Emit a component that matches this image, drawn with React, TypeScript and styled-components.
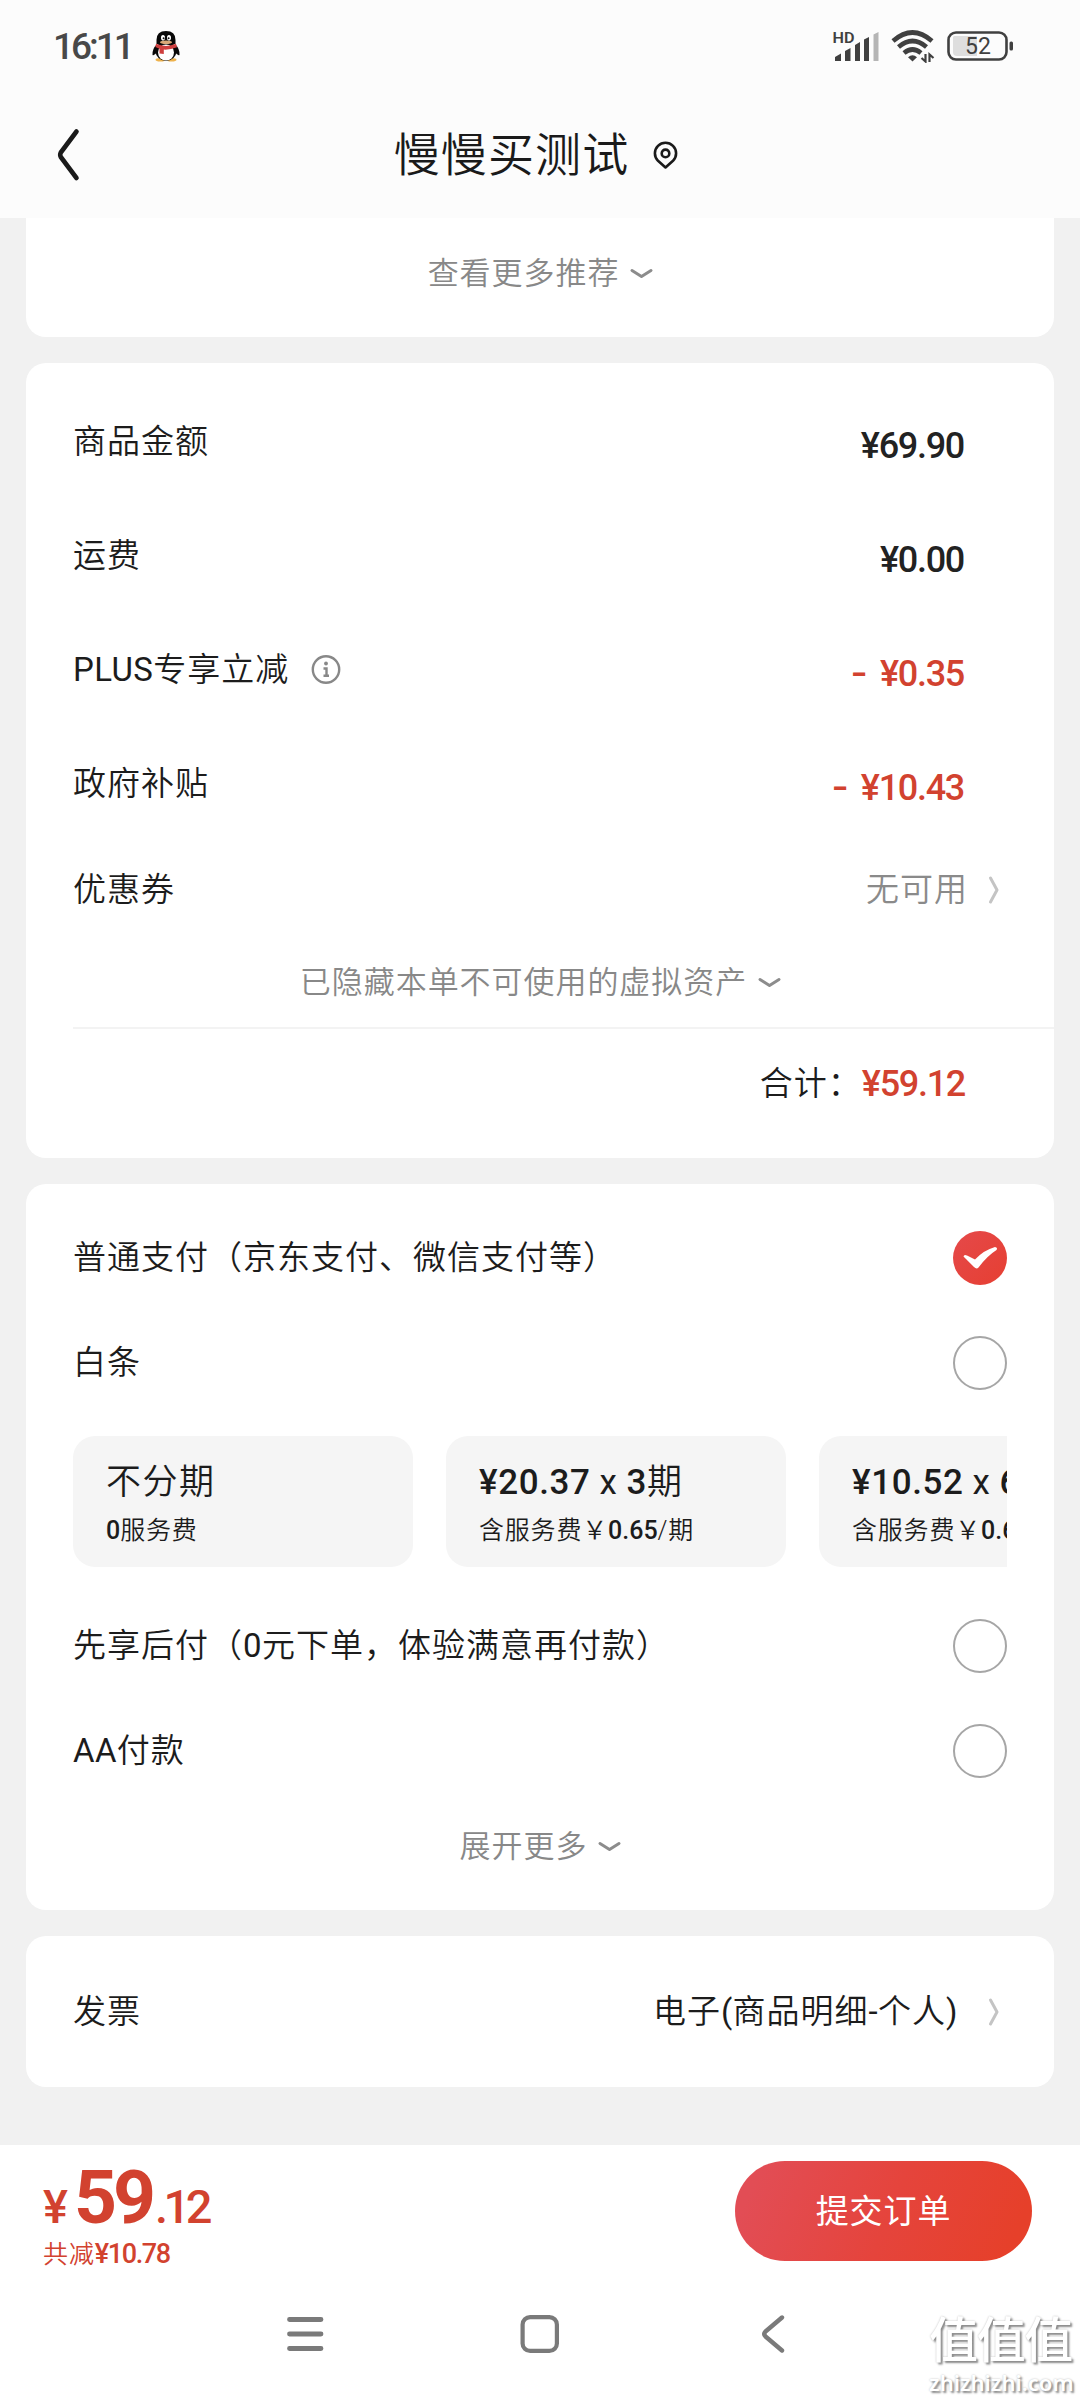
import React from "react";
import styled, { createGlobalStyle } from "styled-components";

const GlobalStyle = createGlobalStyle`
  * { box-sizing: border-box; }
  body {
    margin: 0;
    background: #f1f1f1;
    font-family: Roboto, "Noto Sans CJK SC", sans-serif;
    font-weight: 350;
    color: #1c1c1c;
  }
  svg { display: block; flex: none; }
`;

const RED = "#d2422f";

const Screen = styled.div`
  width: 1080px;
  height: 2400px;
  display: flex;
  flex-direction: column;
  background: #f1f1f1;
  overflow: hidden;
  position: relative;
`;

const Header = styled.header`
  height: 218px;
  flex: none;
  background: #fcfcfc;
`;

const StatusBar = styled.div`
  height: 92px;
  padding: 0 66px 0 53px;
  display: flex;
  align-items: center;
`;

const Clock = styled.span`
  font-size: 37px;
  font-weight: 500;
  letter-spacing: -3px;
  color: #484848;
  width: 99px;
`;

const StatusIcons = styled.div`
  margin-left: auto;
  display: flex;
  align-items: center;
  gap: 12px;
`;

const TitleBar = styled.div`
  height: 126px;
  padding: 0 56px;
  display: grid;
  grid-template-columns: 26px 1fr 26px;
  align-items: center;
`;

const Title = styled.h1`
  margin: 0;
  padding-right: 8px;
  display: flex;
  justify-content: center;
  align-items: center;
  gap: 24px;
  font-size: 46px;
  font-weight: 350;
  letter-spacing: 1.1px;
  line-height: 60px;
  color: #1a1a1a;
`;

const Cards = styled.main`
  flex: 1;
  padding: 0 26px;
  display: flex;
  flex-direction: column;
  gap: 26px;
`;

const Card = styled.section<{ $height: number; $top?: number; $flatTop?: boolean }>`
  height: ${(p) => p.$height}px;
  flex: none;
  background: #fff;
  border-radius: ${(p) => (p.$flatTop ? "0 0 20px 20px" : "20px")};
  padding: ${(p) => p.$top ?? 0}px 0 0 47px;
`;

const Row = styled.div<{ $height: number; $end: number }>`
  height: ${(p) => p.$height}px;
  padding-right: ${(p) => p.$end}px;
  display: flex;
  align-items: center;
  justify-content: space-between;
`;

const Label = styled.span`
  display: flex;
  align-items: center;
  gap: 22px;
  font-size: 33px;
  letter-spacing: 1px;
  line-height: 44px;
  white-space: nowrap;
`;

const Latin = styled.span`
  font-weight: 400;
  letter-spacing: 0.4px;
`;

const Amount = styled.span<{ $red?: boolean; $drop?: number }>`
  display: flex;
  gap: 16px;
  font-size: 36px;
  font-weight: 500;
  letter-spacing: -1.3px;
  line-height: 44px;
  padding-top: ${(p) => p.$drop ?? 0}px;
  color: ${(p) => (p.$red ? RED : "#222")};
`;

const Minus = styled.span`
  transform: scaleX(1.3);
`;

const Value = styled.span<{ $muted?: boolean; $gap: number }>`
  display: flex;
  align-items: center;
  gap: ${(p) => p.$gap}px;
  font-size: 33px;
  letter-spacing: 1px;
  line-height: 44px;
  color: ${(p) => (p.$muted ? "#8a8a8a" : "#1c1c1c")};
`;

const MoreLink = styled.div<{ $height: number }>`
  height: ${(p) => p.$height}px;
  margin-left: -47px;
  padding-left: 1px;
  display: flex;
  align-items: center;
  justify-content: center;
  gap: 11px;
  font-size: 31px;
  letter-spacing: 0.95px;
  line-height: 40px;
  color: #888;
`;

const Divider = styled.hr`
  margin: 0;
  border: 0;
  height: 2px;
  background: #f3f3f3;
`;

const TotalRow = styled.div`
  height: 109px;
  padding-right: 89px;
  display: flex;
  align-items: center;
  justify-content: flex-end;
`;

const Radio = styled.span`
  width: 54px;
  height: 54px;
  border: 2.5px solid #a6a6a6;
  border-radius: 50%;
`;

const Plans = styled.div`
  margin: 21px 47px 26px 0;
  height: 131px;
  display: flex;
  gap: 33px;
  overflow: hidden;
`;

const Plan = styled.div`
  flex: none;
  width: 340px;
  padding: 21px 0 0 33px;
  border-radius: 22px;
  background: #f5f5f5;
  white-space: pre;
`;

const PlanTitle = styled.div`
  font-size: 35px;
  letter-spacing: 1.5px;
  line-height: 52px;
  b { font-weight: 500; letter-spacing: 0.6px; }
`;

const PlanFee = styled.div`
  font-size: 25px;
  letter-spacing: 0.8px;
  line-height: 44px;
  b { font-weight: 500; letter-spacing: 0; }
`;

const CheckoutBar = styled.footer`
  height: 255px;
  flex: none;
  background: #fff;
`;

const CheckoutRow = styled.div`
  height: 134px;
  padding: 16px 48px 0 43px;
  display: flex;
  align-items: flex-start;
  justify-content: space-between;
`;

const Price = styled.div`
  margin-top: 6px;
  display: flex;
  align-items: baseline;
  line-height: 60px;
  font-size: 47px;
  font-weight: 500;
  color: ${RED};
`;

const Yen = styled.span`
  width: 32px;
`;

const Whole = styled.span`
  font-size: 75px;
  font-weight: 700;
  letter-spacing: -4px;
  margin-left: -1px;
`;

const Fraction = styled.span`
  letter-spacing: -4.5px;
  padding-left: 3px;
`;

const Saved = styled.div`
  font-size: 25px;
  letter-spacing: 0.9px;
  line-height: 34px;
  color: ${RED};
  b { font-weight: 500; font-size: 27px; letter-spacing: -1.4px; }
`;

const Submit = styled.button`
  width: 297px;
  height: 100px;
  padding: 2px 0 0;
  border: 0;
  border-radius: 50px;
  background: linear-gradient(112deg, #e24d55 8%, #e5443c 52%, #e6402a 92%);
  color: #fff;
  font: 400 33px/44px Roboto, "Noto Sans CJK SC", sans-serif;
  letter-spacing: 0.9px;
`;

const NavBar = styled.nav`
  height: 110px;
  padding-left: 287px;
  display: grid;
  grid-template-columns: 233px 241px auto;
  align-items: center;
`;

const Watermark = styled.div`
  position: absolute;
  right: 8px;
  bottom: 4px;
  width: 143px;
  text-align: center;
  color: #fff;
  text-shadow: 2px 2px 2px #8d8d8d, 0 0 2px #bbb;
  white-space: nowrap;
`;

const MarkName = styled.div`
  font-size: 49px;
  font-weight: 500;
  letter-spacing: -1.4px;
  line-height: 54px;
`;

const MarkSite = styled.div`
  font-family: "Noto Sans", sans-serif;
  font-size: 22px;
  font-weight: 600;
  line-height: 27px;
`;

const DownChevron = () => (
  <svg width="23" height="12" viewBox="0 0 23 12" fill="none" stroke="#8c8c8c" strokeWidth="3" strokeLinecap="round" strokeLinejoin="round">
    <path d="M2 2.5 L11.500 8.500 L21 2.500" />
  </svg>
);

const RightChevron = () => (
  <svg width="12" height="30" viewBox="0 0 12 30" fill="none" stroke="#c4c4c4" strokeWidth="3" strokeLinecap="round" strokeLinejoin="round">
    <path d="M2.500 3 L9 15 L2.500 27" />
  </svg>
);

const Penguin = () => (
  <svg width="28" height="32" viewBox="0 0 28 32">
    <ellipse cx="8.5" cy="29.8" rx="5" ry="1.8" fill="#eeb24c" />
    <ellipse cx="19.5" cy="29.8" rx="5" ry="1.8" fill="#eeb24c" />
    <path d="M5 14 Q0 19 .5 25 Q2.5 26 5 22 Z M23 14 Q28 19 27.5 25 Q25.5 26 23 22 Z" fill="#080808" />
    <ellipse cx="14" cy="21" rx="10.5" ry="10" fill="#080808" />
    <ellipse cx="14" cy="22.5" rx="8" ry="8" fill="#fff" />
    <path d="M4.5 14 V10 Q4.5 1 14 1 Q23.5 1 23.5 10 V14 Z" fill="#080808" />
    <ellipse cx="11" cy="7.8" rx="2" ry="2.8" fill="#fff" />
    <ellipse cx="17" cy="7.8" rx="2" ry="2.8" fill="#fff" />
    <circle cx="11.6" cy="8.2" r="1" fill="#111" />
    <circle cx="16.6" cy="8.2" r="1" fill="#111" />
    <ellipse cx="14" cy="12.3" rx="6" ry="1.7" fill="#d9a878" />
    <path d="M4 13.8 Q14 18 24 13.8 L25 17.2 Q18 20 11.8 19.6 V24 L7.5 23.5 V18.8 L3.4 17 Z" fill="#cf3f3f" />
  </svg>
);

const Signal = () => (
  <svg width="47" height="32" viewBox="0 0 47 32" fill="#404040">
    <text x="0.5" y="13" fontFamily="Roboto, sans-serif" fontWeight="600" fontSize="15.5" textLength="22" lengthAdjust="spacingAndGlyphs">HD</text>
    <path d="M3 27 L9 23.5 V31 H3 Z M13 21 L18.5 18 V31 H13 Z M23 15 L28 12 V31 H23 Z M32 9.5 L37 7 V31 H32 Z" />
    <path d="M41.5 4.5 L46.5 2 V31 H41.5 Z" fill="#b5b5b5" />
  </svg>
);

const Wifi = () => (
  <svg width="44" height="34" viewBox="0 0 44 34" fill="none" stroke="#404040" strokeWidth="4.6">
    <path d="M2 12 Q21.500 -5 41 12" />
    <path d="M7.500 18 Q21.500 6 35.500 18" />
    <path d="M13 24 Q21.500 17 30 24" />
    <path d="M17 28.300 Q21.500 24 26 28.300 L21.500 32.500 Z" fill="#404040" stroke="none" />
    <path d="M34.500 25 V32.500 L30.500 29 M38.500 33 V25.500 L42.500 29" strokeWidth="2.200" />
  </svg>
);

const Battery = () => (
  <svg width="67" height="32" viewBox="0 0 67 32">
    <rect x="1.500" y="2.500" width="58" height="27" rx="7.500" fill="none" stroke="#404040" strokeWidth="2.600" />
    <path d="M7 6 H30 V26 H10 Q6 26 6 22 V7 Z" fill="#dedede" />
    <rect x="62.500" y="11.500" width="3.500" height="9" rx="1.500" fill="#404040" />
    <text x="31" y="24" textAnchor="middle" fontFamily="Roboto, sans-serif" fontSize="23" fontWeight="400" fill="#404040">52</text>
  </svg>
);

const BackIcon = () => (
  <svg width="26" height="56" viewBox="0 0 26 56" fill="none" stroke="#1a1a1a" strokeWidth="4.6" strokeLinecap="round" strokeLinejoin="round">
    <path d="M20.500 4.500 L4.800 25.500 Q3.600 28 4.800 30 L20.500 51" />
  </svg>
);

const PinIcon = () => (
  <svg width="25" height="29" viewBox="0 0 25 29" fill="none" stroke="#1a1a1a" strokeWidth="2.6" strokeLinejoin="round">
    <path d="M12.500 26.500 L5 19.800 A10.600 10.600 0 1 1 20 19.800 Z" />
    <circle cx="12.500" cy="12.400" r="3.800" />
  </svg>
);

const InfoIcon = () => (
  <svg width="30" height="30" viewBox="0 0 30 30" fill="none" stroke="#888" strokeWidth="2.4">
    <circle cx="15" cy="14.500" r="13.200" />
    <path d="M12.500 13.500 H15.500 V20.500 M12.500 20.800 H18" />
    <circle cx="15" cy="8.500" r="1.900" fill="#888" stroke="none" />
  </svg>
);

const CheckedIcon = () => (
  <svg width="54" height="54" viewBox="0 0 54 54">
    <defs>
      <linearGradient id="checked" x1="0" y1="0" x2="1" y2="1">
        <stop offset="0" stopColor="#e5494a" />
        <stop offset="1" stopColor="#e63f32" />
      </linearGradient>
    </defs>
    <circle cx="27" cy="27" r="27" fill="url(#checked)" />
    <path d="M10.500 25.500 Q11 23 14 24.500 L22 28.500 Q31 19 42 16 Q45 16.500 43.500 19 Q34 25 25.500 36.500 Q23.500 38.500 21 36 Z" fill="#fff" />
  </svg>
);

const MenuIcon = () => (
  <svg width="37" height="40" viewBox="0 0 37 40" stroke="#7a7a7a" strokeWidth="4.8" strokeLinecap="round">
    <path d="M2.500 5.500 H34 M2.500 20 H34 M2.500 34.500 H34" />
  </svg>
);

const HomeIcon = () => (
  <svg width="40" height="40" viewBox="0 0 40 40" fill="none" stroke="#7a7a7a" strokeWidth="4.2">
    <rect x="2.600" y="3.100" width="34.300" height="33.800" rx="7.500" />
  </svg>
);

const NavBackIcon = () => (
  <svg width="24" height="40" viewBox="0 0 24 40" fill="none" stroke="#7a7a7a" strokeWidth="4.4" strokeLinecap="round" strokeLinejoin="round">
    <path d="M21 3.500 L4.500 17.500 Q2 20 4.500 22.500 L21 36.500" />
  </svg>
);

const fees: { name: string; prefix?: string; amount: string; discount?: boolean; info?: boolean }[] = [
  { name: "商品金额", amount: "¥69.90" },
  { name: "运费", amount: "¥0.00" },
  { name: "专享立减", prefix: "PLUS", amount: "¥0.35", discount: true, info: true },
  { name: "政府补贴", amount: "¥10.43", discount: true },
];

const plans = [
  { price: "¥20.37", count: "3", fee: "0.65" },
  { price: "¥10.52", count: "6", fee: "0.64" },
];

export default function App() {
  return (
    <Screen>
      <GlobalStyle />
      <Header>
        <StatusBar>
          <Clock>16:11</Clock>
          <Penguin />
          <StatusIcons>
            <Signal />
            <Wifi />
            <Battery />
          </StatusIcons>
        </StatusBar>
        <TitleBar>
          <BackIcon />
          <Title>
            慢慢买测试
            <PinIcon />
          </Title>
        </TitleBar>
      </Header>

      <Cards>
        <Card $height={119} $flatTop>
          <MoreLink $height={111}>
            查看更多推荐
            <DownChevron />
          </MoreLink>
        </Card>

        <Card $height={795} $top={22}>
          {fees.map((fee) => (
            <Row key={fee.name} $height={114} $end={90}>
              <Label>
                <span>
                  {fee.prefix && <Latin>{fee.prefix}</Latin>}
                  {fee.name}
                </span>
                {fee.info && <InfoIcon />}
              </Label>
              <Amount $red={fee.discount} $drop={8}>
                {fee.discount && <Minus>-</Minus>}
                <span>{fee.amount}</span>
              </Amount>
            </Row>
          ))}
          <Row $height={98} $end={54}>
            <Label>优惠券</Label>
            <Value $muted $gap={20}>
              无可用
              <RightChevron />
            </Value>
          </Row>
          <MoreLink $height={88}>
            已隐藏本单不可使用的虚拟资产
            <DownChevron />
          </MoreLink>
          <Divider />
          <TotalRow>
            <Label>合计：</Label>
            <Amount $red>¥59.12</Amount>
          </TotalRow>
        </Card>

        <Card $height={726} $top={21}>
          <Row $height={106} $end={47}>
            <Label>普通支付（京东支付、微信支付等）</Label>
            <CheckedIcon />
          </Row>
          <Row $height={104} $end={47}>
            <Label>白条</Label>
            <Radio />
          </Row>
          <Plans>
            <Plan>
              <PlanTitle>不分期</PlanTitle>
              <PlanFee><b>0</b>服务费</PlanFee>
            </Plan>
            {plans.map((plan) => (
              <Plan key={plan.price}>
                <PlanTitle><b>{plan.price}</b><Latin> x </Latin><b>{plan.count}</b>期</PlanTitle>
                <PlanFee>含服务费￥<b>{plan.fee}</b>/期</PlanFee>
              </Plan>
            ))}
          </Plans>
          <Row $height={105} $end={47}>
            <Label><span>先享后付（<Latin>0</Latin>元下单，体验满意再付款）</span></Label>
            <Radio />
          </Row>
          <Row $height={105} $end={47}>
            <Label><span><Latin>AA</Latin>付款</span></Label>
            <Radio />
          </Row>
          <MoreLink $height={87}>
            展开更多
            <DownChevron />
          </MoreLink>
        </Card>

        <Card $height={151}>
          <Row $height={151} $end={54}>
            <Label>发票</Label>
            <Value $gap={30}>
              <span>电子<Latin>(</Latin>商品明细<Latin>-</Latin>个人<Latin>)</Latin></span>
              <RightChevron />
            </Value>
          </Row>
        </Card>
      </Cards>

      <CheckoutBar>
        <CheckoutRow>
          <div>
            <Price>
              <Yen>¥</Yen>
              <Whole>59</Whole>
              <Fraction>.12</Fraction>
            </Price>
            <Saved>共减<b>¥10.78</b></Saved>
          </div>
          <Submit>提交订单</Submit>
        </CheckoutRow>
        <NavBar>
          <MenuIcon />
          <HomeIcon />
          <NavBackIcon />
        </NavBar>
      </CheckoutBar>

      <Watermark>
        <MarkName>值值值</MarkName>
        <MarkSite>zhizhizhi.com</MarkSite>
      </Watermark>
    </Screen>
  );
}
